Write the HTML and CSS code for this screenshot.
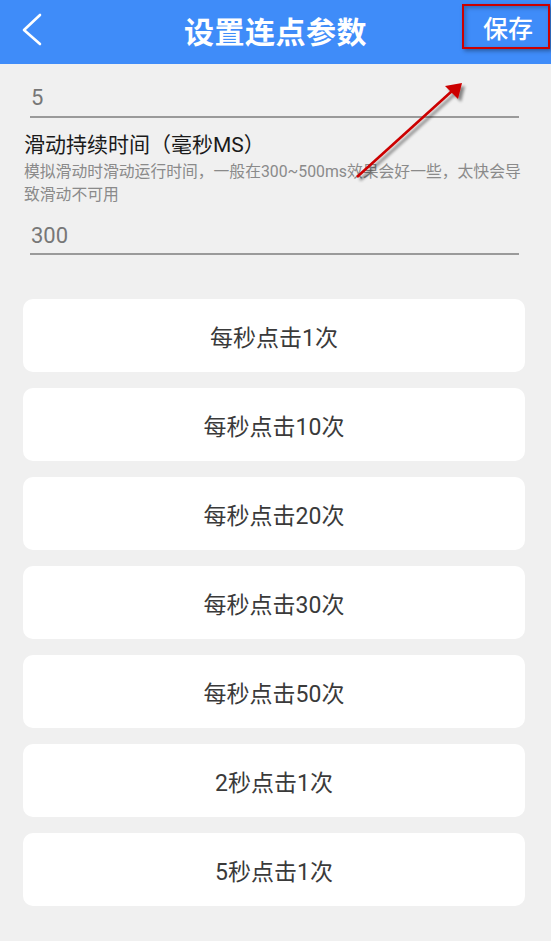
FILE: index.html
```html
<!DOCTYPE html>
<html lang="zh-CN">
<head>
  <meta charset="UTF-8" />
  <meta name="viewport" content="width=device-width, initial-scale=1" />
  <title>设置连点参数</title>
  <link rel="stylesheet" href="styles.css">
</head>
<body>
  <header class="topbar">
    <div class="back">
      <svg width="24" height="36" viewBox="0 0 24 36">
        <polyline points="19,3 3,18 19,32" fill="none" stroke="#fff" stroke-width="2.6" stroke-linecap="round" stroke-linejoin="round" />
      </svg>
    </div>
    <h1>设置连点参数</h1>
    <div class="save-wrap">
      <button class="save">保存</button>
    </div>
  </header>

  <main>
    <div class="field first">
      <span class="value">5</span>
    </div>

    <h2 class="label">滑动持续时间（毫秒MS）</h2>
    <p class="hint">模拟滑动时滑动运行时间，一般在300~500ms效果会好一些，太快会导致滑动不可用</p>

    <div class="field">
      <span class="value">300</span>
    </div>

    <ul class="presets">
      <li>每秒点击1次</li>
      <li>每秒点击10次</li>
      <li>每秒点击20次</li>
      <li>每秒点击30次</li>
      <li>每秒点击50次</li>
      <li>2秒点击1次</li>
      <li>5秒点击1次</li>
    </ul>
  </main>

  <!-- annotation arrow pointing at the save button -->
  <svg class="note-arrow" width="551" height="941" viewBox="0 0 551 941">
    <defs>
      <filter id="drop" x="-20%" y="-20%" width="140%" height="140%">
        <feGaussianBlur in="SourceAlpha" stdDeviation="1.6" />
        <feOffset dx="3" dy="3" result="b" />
        <feComponentTransfer><feFuncA type="linear" slope="0.45" /></feComponentTransfer>
        <feMerge><feMergeNode /><feMergeNode in="SourceGraphic" /></feMerge>
      </filter>
    </defs>
    <g filter="url(#drop)">
      <line x1="357" y1="177" x2="452" y2="91" stroke="#cc0000" stroke-width="2.6" />
      <polygon points="462,83 445,86 458,99" fill="#cc0000" />
    </g>
  </svg>
</body>
</html>
```

FILE: styles.css
```css
body {
  margin: 0;
  background: #f0f0f0;
  font-family: Roboto, "Noto Sans CJK SC", sans-serif;
  color: #333;
  position: relative;
  min-height: 941px;
}
.topbar {
  height: 64px;
  background: #3f8cf9;
  display: grid;
  grid-template-columns: 1fr auto 1fr;
  align-items: center;
}
.back {
  padding-left: 21px;
  display: flex;
  align-items: center;
  height: 64px;
}
.back svg {
  display: block;
  margin-top: -4px;
}
.topbar h1 {
  margin: 0;
  color: #fff;
  font-size: 30px;
  font-weight: bold;
  letter-spacing: 0.5px;
  margin-top: -4px;
}
.save-wrap {
  align-self: start;
  display: flex;
  justify-content: flex-end;
  padding-top: 4px;
  padding-right: 1px;
}
.save {
  width: 88px;
  height: 45px;
  box-sizing: border-box;
  border: 2px solid #cc0000;
  background: transparent;
  color: #fff;
  font-family: Roboto, "Noto Sans CJK SC", sans-serif;
  font-size: 25px;
  font-weight: 500;
  padding: 0 0 0 4px;
  box-shadow: 2px 2px 4px rgba(0, 0, 0, 0.35), inset 2px 2px 4px rgba(0, 0, 0, 0.25);
}
main {
  padding: 0 20px 0 24px;
}
.field {
  margin: 17px 12px 0 6px;
  padding: 0 0 4px 1px;
  border-bottom: 2px solid #9a9a9a;
  height: 26px;
  line-height: 26px;
}
.field.first {
  margin-top: 21px;
  padding-bottom: 5px;
}
.value {
  font-size: 22px;
  color: #777;
}
.label {
  margin: 14px 0 0;
  font-size: 21px;
  line-height: 26px;
  font-weight: normal;
  color: #1a1a1a;
}
.hint {
  margin: 2px 0 0;
  font-size: 15.8px;
  line-height: 23px;
  color: #8a8a8a;
}
.presets {
  list-style: none;
  margin: 44px 6px 0 -1px;
  padding: 0;
  display: flex;
  flex-direction: column;
  gap: 16px;
}
.presets li {
  height: 73px;
  background: #fff;
  border-radius: 10px;
  display: flex;
  align-items: center;
  justify-content: center;
  font-size: 23px;
  color: #3a3a3a;
}
.note-arrow {
  position: absolute;
  left: 0;
  top: 0;
  pointer-events: none;
}
```
